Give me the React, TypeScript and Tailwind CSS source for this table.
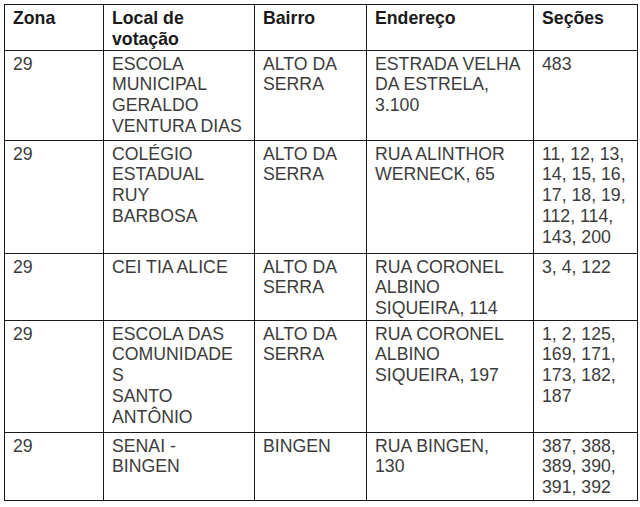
import React from "react";

const rows: { h: string; cells: React.ReactNode[] }[] = [
  {
    h: "h-[90px]",
    cells: [
      "29",
      <>ESCOLA<br />MUNICIPAL<br />GERALDO<br />VENTURA DIAS</>,
      <>ALTO DA<br />SERRA</>,
      <>ESTRADA VELHA<br />DA ESTRELA,<br />3.100</>,
      "483",
    ],
  },
  {
    h: "h-[113px]",
    cells: [
      "29",
      <>COLÉGIO<br />ESTADUAL<br />RUY<br />BARBOSA</>,
      <>ALTO DA<br />SERRA</>,
      <>RUA ALINTHOR<br />WERNECK, 65</>,
      <>11, 12, 13,<br />14, 15, 16,<br />17, 18, 19,<br />112, 114,<br />143, 200</>,
    ],
  },
  {
    h: "h-[67px]",
    cells: [
      "29",
      "CEI TIA ALICE",
      <>ALTO DA<br />SERRA</>,
      <>RUA CORONEL<br />ALBINO<br />SIQUEIRA, 114</>,
      "3, 4, 122",
    ],
  },
  {
    h: "h-[112px]",
    cells: [
      "29",
      <>ESCOLA DAS<br />COMUNIDADE<br />S<br />SANTO<br />ANTÔNIO</>,
      <>ALTO DA<br />SERRA</>,
      <>RUA CORONEL<br />ALBINO<br />SIQUEIRA, 197</>,
      <>1, 2, 125,<br />169, 171,<br />173, 182,<br />187</>,
    ],
  },
  {
    h: "h-[68px]",
    cells: [
      "29",
      <>SENAI -<br />BINGEN</>,
      "BINGEN",
      <>RUA BINGEN,<br />130</>,
      <>387, 388,<br />389, 390,<br />391, 392</>,
    ],
  },
];

const widths = ["w-[99px]", "w-[151px]", "w-[112px]", "w-[167px]", "w-[104px]"];

export default function App() {
  return (
    <div className="w-[640px] h-[507px] bg-white pt-[4px] pl-[4px] font-['Liberation_Sans',Arial,sans-serif] text-[17.7px] leading-[20.8px]">
      <table className="border-collapse table-fixed w-[634px]">
        <thead>
          <tr className="h-[45px]">
            {[
              "Zona",
              <>Local de<br />votação</>,
              "Bairro",
              "Endereço",
              "Seções",
            ].map((c, i) => (
              <th
                key={i}
                className={`${widths[i]} border border-[#1a1a1a] align-top text-left font-bold text-[#1a1a1a] pl-[8px] pr-[4px] pt-[3px]`}
              >
                {c}
              </th>
            ))}
          </tr>
        </thead>
        <tbody>
          {rows.map((r, ri) => (
            <tr key={ri} className={r.h}>
              {r.cells.map((c, ci) => (
                <td
                  key={ci}
                  className="border border-[#1a1a1a] align-top text-left text-[#3c3c3c] pl-[8px] pr-[4px] pt-[3px] whitespace-nowrap"
                >
                  {c}
                </td>
              ))}
            </tr>
          ))}
        </tbody>
      </table>
    </div>
  );
}
